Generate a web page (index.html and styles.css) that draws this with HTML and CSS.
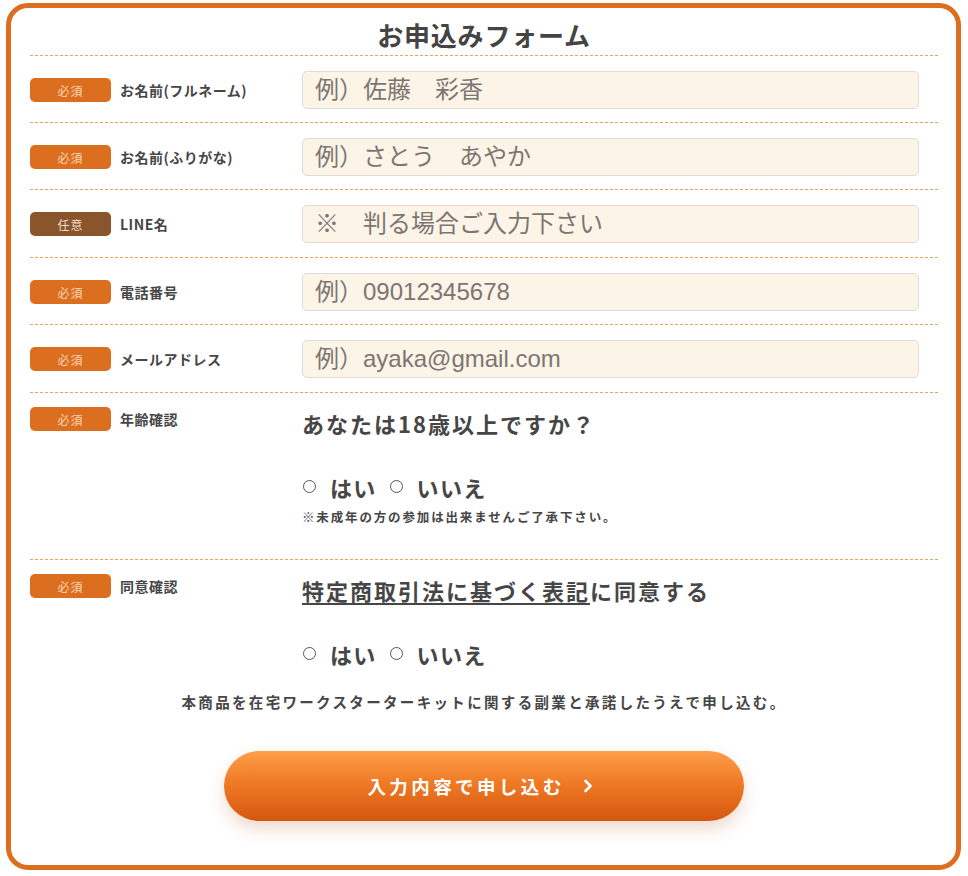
FILE: index.html
```html
<!DOCTYPE html>
<html lang="ja">
<head>
<meta charset="utf-8">
<title>お申込みフォーム</title>
<link rel="stylesheet" href="styles.css">
</head>
<body>
<form class="frame">
  <h1 class="title">お申込みフォーム</h1>

  <div class="row">
    <div class="head"><span class="badge">必須</span><span class="label">お名前(フルネーム)</span></div>
    <div class="body"><input class="field" type="text" placeholder="例）佐藤　彩香"></div>
  </div>
  <div class="row">
    <div class="head"><span class="badge">必須</span><span class="label">お名前(ふりがな)</span></div>
    <div class="body"><input class="field" type="text" placeholder="例）さとう　あやか"></div>
  </div>
  <div class="row">
    <div class="head"><span class="badge optional">任意</span><span class="label">LINE名</span></div>
    <div class="body"><input class="field" type="text" placeholder="※　判る場合ご入力下さい"></div>
  </div>
  <div class="row">
    <div class="head"><span class="badge">必須</span><span class="label">電話番号</span></div>
    <div class="body"><input class="field" type="tel" placeholder="例）09012345678"></div>
  </div>
  <div class="row">
    <div class="head"><span class="badge">必須</span><span class="label">メールアドレス</span></div>
    <div class="body"><input class="field" type="email" placeholder="例）ayaka@gmail.com"></div>
  </div>

  <div class="row tall">
    <div class="head"><span class="badge">必須</span><span class="label">年齢確認</span></div>
    <div class="body">
      <p class="question">あなたは18歳以上ですか？</p>
      <div class="choices">
        <label class="choice"><span class="dot"></span>はい</label>
        <label class="choice"><span class="dot"></span>いいえ</label>
      </div>
      <p class="note">※未成年の方の参加は出来ませんご了承下さい。</p>
    </div>
  </div>

  <div class="row last">
    <div class="head"><span class="badge">必須</span><span class="label">同意確認</span></div>
    <div class="body">
      <p class="question"><a class="law" href="#">特定商取引法に基づく表記</a>に同意する</p>
      <div class="choices">
        <label class="choice"><span class="dot"></span>はい</label>
        <label class="choice"><span class="dot"></span>いいえ</label>
      </div>
    </div>
  </div>

  <p class="consent">本商品を在宅ワークスターターキットに関する副業と承諾したうえで申し込む。</p>

  <div class="actions">
    <button class="submit" type="button">入力内容で申し込む<svg class="chev" width="10" height="14" viewBox="0 0 10 14"><path d="M2.5 2 L7.5 7 L2.5 12" fill="none" stroke="#fff" stroke-width="2.6" stroke-linecap="round" stroke-linejoin="round"/></svg></button>
  </div>
</form>
</body>
</html>
```

FILE: styles.css
```css
* { box-sizing: border-box; }

html, body {
  margin: 0;
  padding: 0;
  background: #fff;
}

body {
  font-family: "Noto Sans CJK JP", "Noto Sans", sans-serif;
  color: #464646;
}

.frame {
  display: block;
  margin: 3px 7px 5px 6px;
  border: 5px solid #dc6e20;
  border-radius: 22px;
  padding: 0 18px 44px 19px;
  background: #fff;
}

.title,
.row {
  background-image: repeating-linear-gradient(to right, #e3aa55 0 3px, transparent 3px 5px);
  background-repeat: no-repeat;
  background-position: left bottom;
  background-size: 100% 1px;
}

.title {
  margin: 0;
  padding-top: 9px;
  height: 48px;
  line-height: 36px;
  font-size: 26px;
  font-weight: 700;
  text-align: center;
  letter-spacing: 0.8px;
  color: #444;
}

.row {
  display: grid;
  grid-template-columns: 272px 1fr;
  align-items: center;
  padding: 15px 19px 14px 0;
}

.row:nth-of-type(3),
.row:nth-of-type(5) {
  padding-bottom: 15px;
}

.row.tall,
.row.last {
  align-items: start;
  padding-top: 14px;
}

.row.tall { padding-bottom: 33px; }

.row.last {
  background-image: none;
  padding-bottom: 0;
}

.head {
  display: flex;
  align-items: center;
  gap: 9px;
}

.badge {
  display: inline-flex;
  align-items: center;
  justify-content: center;
  width: 81px;
  height: 24px;
  border-radius: 5px;
  background: #dc6e20;
  color: #fcd6b6;
  font-size: 12px;
  letter-spacing: 1px;
}

.badge.optional {
  background: #8a552a;
  color: #f1dcc8;
}

.label {
  font-size: 14px;
  font-weight: 700;
  letter-spacing: 0.5px;
  color: #464646;
}

.field {
  display: block;
  width: 100%;
  height: 38px;
  padding: 0 12px;
  border: 1px solid #e0dcd5;
  border-radius: 5px;
  background: #fdf4e8;
  font-family: "Liberation Sans", "Noto Sans CJK JP", sans-serif;
  font-size: 24px;
  color: #444;
  outline: none;
}

.field::placeholder {
  color: #7b7671;
  opacity: 1;
}

.body { min-width: 0; }

.question {
  margin: 0;
  font-size: 22px;
  line-height: 33px;
  font-weight: 700;
  letter-spacing: 2px;
  color: #464646;
}

.law {
  color: #464646;
  text-decoration: underline;
  text-decoration-thickness: 2px;
  text-underline-offset: 3px;
}

.choices {
  display: flex;
  align-items: center;
  margin-top: 30px;
  height: 33px;
}

.choice {
  display: inline-flex;
  align-items: center;
  font-size: 22px;
  font-weight: 700;
  letter-spacing: 1.3px;
  margin-right: 12px;
}

.dot {
  width: 13px;
  height: 13px;
  border: 1px solid #555;
  border-radius: 50%;
  margin: 0 14px 0 1px;
  flex: none;
}

.note {
  margin: 4px 0 0;
  font-size: 12.5px;
  line-height: 20px;
  font-weight: 700;
  letter-spacing: 1.85px;
  color: #464646;
}

.consent {
  margin: 21px 0 0;
  text-align: center;
  font-size: 14.5px;
  line-height: 22px;
  font-weight: 700;
  letter-spacing: 2.33px;
  color: #464646;
}

.actions {
  display: flex;
  justify-content: center;
  margin-top: 38px;
}

.submit {
  display: inline-flex;
  align-items: center;
  justify-content: center;
  gap: 18px;
  width: 520px;
  height: 70px;
  border: 0;
  border-radius: 35px;
  background: linear-gradient(to bottom, #ff9e4a 0%, #ef7a25 45%, #d5570f 100%);
  box-shadow: 0 8px 16px rgba(190, 110, 60, 0.25);
  color: #fff;
  font-family: "Noto Sans CJK JP", sans-serif;
  font-size: 18.5px;
  font-weight: 700;
  letter-spacing: 3.4px;
  cursor: pointer;
  padding: 0 8px 0 0;
}

.chev { display: block; }
```
